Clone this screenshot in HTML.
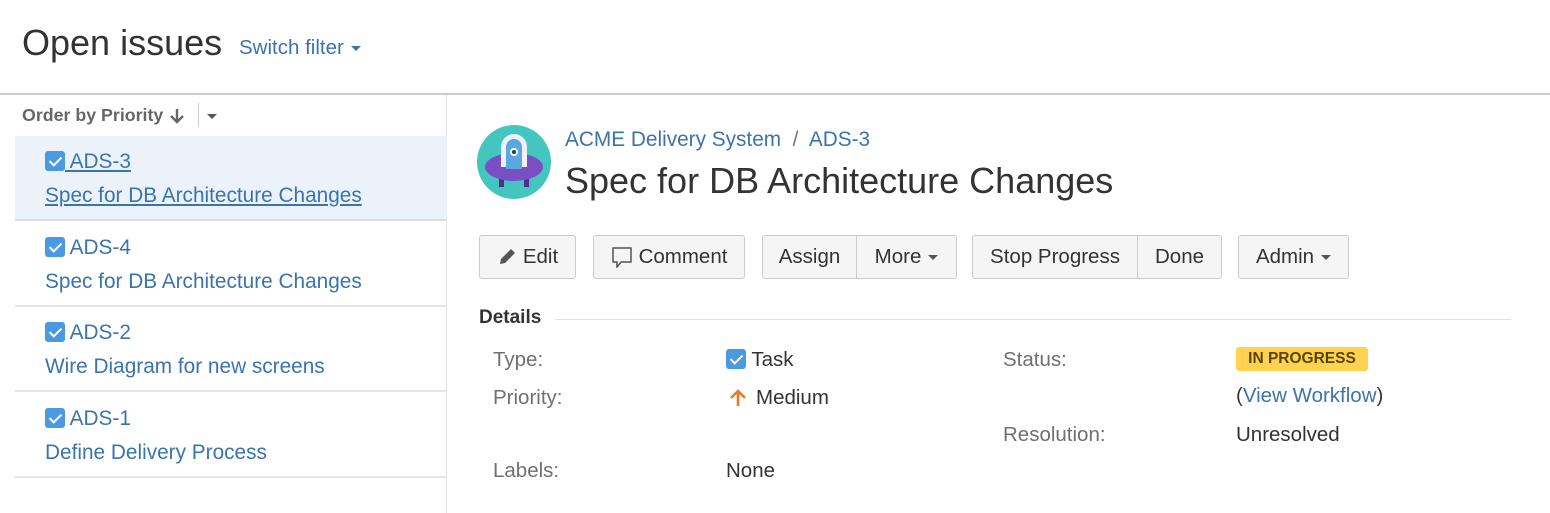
<!DOCTYPE html>
<html><head><style>
*{margin:0;padding:0;box-sizing:border-box}
body{width:1550px;height:513px;overflow:hidden;background:#fff;font-family:"Liberation Sans",Arial,sans-serif;color:#333;position:relative}
.a{position:absolute;white-space:nowrap}
.link{color:#3b73af}
.btn{position:absolute;top:235px;height:44px;border:1px solid #ccc;border-radius:3px;background:#f5f5f5;font-size:20.5px;color:#333;display:flex;align-items:center}
.btn span{height:100%;display:flex;align-items:center;justify-content:center}
.btn span+span{border-left:1px solid #ccc}
.cb{display:inline-block;width:20px;height:20px;background:#4a9ae1;border-radius:3px;position:relative;vertical-align:-3px}
.cb:after{content:"";position:absolute;left:7px;top:3px;width:5px;height:10px;border:solid #fff;border-width:0 2.5px 2.5px 0;transform:rotate(45deg)}
.caret{display:inline-block;width:0;height:0;border-left:5px solid transparent;border-right:5px solid transparent;border-top:5px solid #555;margin-left:7px;vertical-align:3px}
.row{position:absolute;left:15px;width:432px;height:85px;border-bottom:2px solid #e5e5e5;font-size:20.8px}
.row .k{position:absolute;left:30px;top:14px}
.row .t{position:absolute;left:30px;top:48px}
.lbl{color:#707070;font-size:20.5px}
.val{font-size:20.5px;color:#333}
</style></head><body>
<div class="a" style="left:22px;top:22px;font-size:36px;color:#333">Open issues</div>
<div class="a link" style="left:239px;top:36px;font-size:20.5px">Switch filter<span class="caret" style="border-top-color:#3b73af"></span></div>
<div class="a" style="left:0;top:93px;width:1550px;height:2px;background:#ccc"></div>
<div class="a" style="left:446px;top:95px;width:1px;height:418px;background:#e0e0e0"></div>
<div class="a" style="left:22px;top:105px;font-size:17.8px;font-weight:bold;color:#666">Order by Priority</div>
<svg class="a" style="left:169px;top:107px" width="16" height="18" viewBox="0 0 16 18"><path d="M8 2v13M2 9l6 6 6-6" fill="none" stroke="#666" stroke-width="2.4"/></svg>
<div class="a" style="left:198px;top:103px;width:1px;height:24px;background:#ccc"></div>
<span class="a caret" style="left:200px;top:114px"></span>
<div class="row" style="top:136px;background:#ebf2f9;border-bottom-color:#ddd"><div class="a k"><span class="cb"></span><span class="link" style="text-decoration:underline"> ADS-3</span></div><div class="a t link" style="text-decoration:underline">Spec for DB Architecture Changes</div></div>
<div class="row" style="top:222px"><div class="a k"><span class="cb"></span> <span class="link">ADS-4</span></div><div class="a t link">Spec for DB Architecture Changes</div></div>
<div class="row" style="top:307px"><div class="a k"><span class="cb"></span> <span class="link">ADS-2</span></div><div class="a t link">Wire Diagram for new screens</div></div>
<div class="row" style="top:393px"><div class="a k"><span class="cb"></span> <span class="link">ADS-1</span></div><div class="a t link">Define Delivery Process</div></div>
<svg class="a" style="left:477px;top:125px" width="74" height="74" viewBox="0 0 74 74">
<circle cx="37" cy="37" r="37" fill="#44c5c0"/>
<rect x="22" y="52" width="5" height="10" fill="#4d2e8a"/><rect x="47" y="52" width="5" height="10" fill="#4d2e8a"/>
<ellipse cx="37" cy="42" rx="29" ry="14" fill="#7b4fc4"/>
<path d="M24 42V22a13 13 0 0 1 26 0v20z" fill="#f0f0f8"/>
<path d="M29 44V22a8 8 0 0 1 16 0v22z" fill="#5aa8e0"/>
<circle cx="37" cy="27" r="4" fill="#fff"/><circle cx="37" cy="27" r="2" fill="#253858"/>
</svg>
<div class="a link" style="left:565px;top:128px;font-size:20.8px">ACME Delivery System <span style="color:#777">&nbsp;/&nbsp;</span> ADS-3</div>
<div class="a" style="left:565px;top:160px;font-size:36px;color:#333">Spec for DB Architecture Changes</div>
<div class="btn" style="left:479px;width:97px"><span style="width:100%"><svg width="20" height="20" viewBox="0 0 20 20" style="margin-right:6px"><path d="M3 17l1-5L14 2l4 4L8 16z" fill="#555"/></svg>Edit</span></div>
<div class="btn" style="left:593px;width:152px"><span style="width:100%"><svg width="22" height="22" viewBox="0 0 22 22" style="margin-right:6px"><path d="M2 2h18v14H10l-4 5v-5H2z" fill="none" stroke="#555" stroke-width="1.5"/></svg>Comment</span></div>
<div class="btn" style="left:762px;width:195px"><span style="width:93px">Assign</span><span style="flex:1">More<i class="caret"></i></span></div>
<div class="btn" style="left:972px;width:250px"><span style="width:164px">Stop Progress</span><span style="flex:1">Done</span></div>
<div class="btn" style="left:1238px;width:111px"><span style="width:100%">Admin<i class="caret"></i></span></div>
<div class="a" style="left:479px;top:307px;font-size:19px;font-weight:bold;color:#333">Details</div>
<div class="a" style="left:555px;top:319px;width:956px;height:1px;background:#e0e0e0"></div>
<div class="a lbl" style="left:493px;top:348px">Type:</div>
<div class="a val" style="left:726px;top:348px"><span class="cb"></span> Task</div>
<div class="a lbl" style="left:493px;top:386px">Priority:</div>
<svg class="a" style="left:729px;top:388px" width="18" height="20" viewBox="0 0 18 20"><path d="M9 18V3M2 10l7-7 7 7" fill="none" stroke="#e8792b" stroke-width="2.6"/></svg>
<div class="a val" style="left:756px;top:386px">Medium</div>
<div class="a lbl" style="left:493px;top:459px">Labels:</div>
<div class="a val" style="left:726px;top:459px">None</div>
<div class="a lbl" style="left:1003px;top:348px">Status:</div>
<div class="a" style="left:1236px;top:347px;height:24px;width:132px;text-align:center;background:#ffd351;border-radius:3px;font-size:15.5px;font-weight:bold;color:#594300;line-height:24px">IN PROGRESS</div>
<div class="a val" style="left:1236px;top:384px">(<span class="link">View Workflow</span>)</div>
<div class="a lbl" style="left:1003px;top:423px">Resolution:</div>
<div class="a val" style="left:1236px;top:423px">Unresolved</div>
</body></html>
